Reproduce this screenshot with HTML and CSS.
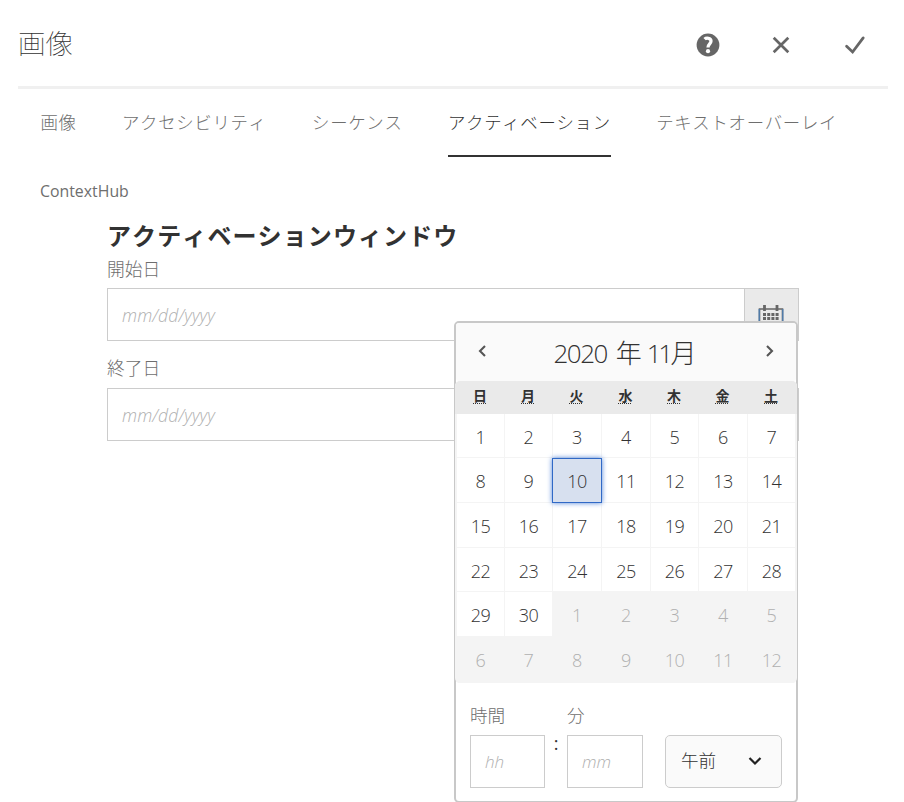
FILE: index.html
```html
<!DOCTYPE html>
<html lang="ja">
<head>
<meta charset="utf-8">
<title>画像</title>
<link rel="stylesheet" href="styles.css">
</head>
<body>
<main class="dialog">
  <header class="dialog-header">
    <h1>画像</h1>
    <div class="actions">
      <button class="icon-button" aria-label="ヘルプ"><svg width="24" height="24" viewBox="0 0 24 24"><circle cx="12" cy="12" r="11.4" fill="#666"/><path d="M8.6 6.2C10.2 4.6 15 4.8 15 8.1C15 10.9 12 10.8 12 14.6" fill="none" stroke="#fff" stroke-width="3.3"/><circle cx="12" cy="18.2" r="2.1" fill="#fff"/></svg></button>
      <button class="icon-button" aria-label="閉じる"><svg width="24" height="24" viewBox="0 0 24 24"><path d="M4.7 4.7L19.3 19.3M19.3 4.7L4.7 19.3" fill="none" stroke="#666" stroke-width="2.7"/></svg></button>
      <button class="icon-button" aria-label="完了"><svg width="24" height="24" viewBox="0 0 24 24"><path d="M3.6 13.3L9.6 19L20.2 4.9" fill="none" stroke="#666" stroke-width="2.8" stroke-linecap="round"/></svg></button>
    </div>
  </header>
  <nav class="tabs">
    <a class="tab">画像</a>
    <a class="tab">アクセシビリティ</a>
    <a class="tab">シーケンス</a>
    <a class="tab active">アクティベーション</a>
    <a class="tab">テキストオーバーレイ</a>
  </nav>
  <div class="context-label"><span>ContextHub</span></div>
  <section class="activation">
    <h2>アクティベーションウィンドウ</h2>
    <label class="field-label">開始日</label>
    <div class="date-field start">
      <div class="date-input"><span class="hint">mm/dd/yyyy</span></div>
      <div class="date-button"><svg width="26" height="26" viewBox="0 0 26 26"><path d="M1.5 24V5H24.5V24Z" fill="none" stroke="#666" stroke-width="1.6"/><path d="M1.2 5V24M24.8 5V24" stroke="#4c80b8" stroke-width="1.2"/><path d="M6.5 1V7M19 1V7" stroke="#666" stroke-width="2.8"/><path d="M5 10.5H21M5 14.5H21M5 18.5H21" stroke="#666" stroke-width="3" stroke-dasharray="3 1.2"/></svg></div>
      <div class="calendar">
        <div class="month-bar">
          <svg width="12" height="14" viewBox="0 0 12 14"><path d="M9 2L4 7L9 12" fill="none" stroke="#555" stroke-width="2.1"/></svg>
          <span class="month"><span class="year">2020</span><span>年</span><span><span class="month-number">11</span>月</span></span>
          <svg width="12" height="14" viewBox="0 0 12 14"><path d="M3 2L8 7L3 12" fill="none" stroke="#555" stroke-width="2.1"/></svg>
        </div>
        <div class="month-table">
          <div class="weekdays"><abbr>日</abbr><abbr>月</abbr><abbr>火</abbr><abbr>水</abbr><abbr>木</abbr><abbr>金</abbr><abbr>土</abbr></div>
          <div class="days">
            <span>1</span><span>2</span><span>3</span><span>4</span><span>5</span><span>6</span><span>7</span>
            <span>8</span><span>9</span><span class="today">10</span><span>11</span><span>12</span><span>13</span><span>14</span>
            <span>15</span><span>16</span><span>17</span><span>18</span><span>19</span><span>20</span><span>21</span>
            <span>22</span><span>23</span><span>24</span><span>25</span><span>26</span><span>27</span><span>28</span>
            <span>29</span><span>30</span><span class="out">1</span><span class="out">2</span><span class="out">3</span><span class="out">4</span><span class="out">5</span>
            <span class="out">6</span><span class="out">7</span><span class="out">8</span><span class="out">9</span><span class="out">10</span><span class="out">11</span><span class="out">12</span>
          </div>
        </div>
        <div class="time">
          <div class="time-part"><label>時間</label><div class="time-input"><span class="hint">hh</span></div></div>
          <span class="colon">:</span>
          <div class="time-part"><label>分</label><div class="time-input minute"><span class="hint">mm</span></div></div>
          <div class="period"><span>午前</span><svg width="14" height="10" viewBox="0 0 14 10"><path d="M1.5 2L7 7.5L12.5 2" fill="none" stroke="#222" stroke-width="2.2"/></svg></div>
        </div>
      </div>
    </div>
    <label class="field-label end-label">終了日</label>
    <div class="date-field">
      <div class="date-input"><span class="hint">mm/dd/yyyy</span></div>
      <div class="date-button"></div>
    </div>
  </section>
</main>
</body>
</html>
```
FILE: styles.css
```css
* { box-sizing: border-box; }
body {
  margin: 0;
  height: 802px;
  overflow: hidden;
  background: #fff;
  color: #323232;
  font-family: "Open Sans", "Noto Sans CJK JP", sans-serif;
  font-size: 18px;
  font-weight: 300;
}
h1, h2 { margin: 0; }
.dialog { padding: 0 16px 0 18px; }
.dialog-header {
  display: flex;
  justify-content: space-between;
  height: 89px;
  border-bottom: 3px solid #f0f0f0;
}
h1 { font: 100 27.5px/40px "Noto Sans CJK JP", sans-serif; margin-top: 22px; }
.actions { display: flex; gap: 49.5px; height: 24px; margin: 33px 21.5px 0 0; }
.icon-button { display: block; width: 24px; height: 24px; padding: 0; border: 0; background: none; }
.icon-button svg { display: block; }
.tabs { display: flex; gap: 45.4px; height: 68px; padding-left: 22.4px; }
.tab {
  height: 68px;
  line-height: 66px;
  color: #6e6e6e;
  font-family: "Noto Sans CJK JP", sans-serif;
  font-size: 17.4px;
  letter-spacing: .7px;
  font-kerning: none;
  white-space: nowrap;
}
.tab.active { color: #323232; border-bottom: 2px solid #323232; }
.context-label { height: 64px; padding: 22px 0 0 22px; color: #6e6e6e; line-height: 24px; font-size: 16.5px; font-weight: 400; }
.context-label span { display: inline-block; transform: scaleX(.96); transform-origin: left; }
.activation { width: 692px; margin-left: 89px; }
h2 { height: 35px; font: 700 24px/28px "Noto Sans CJK JP", sans-serif; letter-spacing: 1.1px; font-kerning: none; }
.field-label { display: block; height: 32px; line-height: 26px; color: #6e6e6e; font-size: 17.8px; }
.date-field { display: flex; position: relative; height: 53px; border: 1px solid #ccc; }
.end-label { margin-top: 14px; height: 33px; }
.date-input { flex: 1; padding-left: 14px; line-height: 52px; }
.hint { color: #b0b0b0; font-size: 17px; font-style: italic; font-weight: 300; }
.date-input .hint { font-size: 17.6px; letter-spacing: .1px; }
.date-button { width: 54px; background: #eaeaea; border-left: 1px solid #ccc; padding: 15px 0 0 13px; }
.calendar {
  position: absolute;
  z-index: 1;
  left: 346px;
  top: 32px;
  width: 344px;
  height: 482px;
  background: #fff;
  border: 2px solid #c8c8c8;
  border-radius: 5px;
}
.month-bar { display: flex; justify-content: space-between; height: 58px; padding: 21px 20px 0; background: #fafafa; border-radius: 3px; }
.month { display: flex; gap: 9px; margin: -8px 2px 0 0; line-height: 34px; font-size: 26px; }
.year { letter-spacing: -1.5px; }
.month-number { margin-left: -4px; letter-spacing: -3.5px; margin-right: 1px; }
.month-table { margin: 0 -1px; background: #f4f4f4; border-radius: 5px; overflow: hidden; }
.weekdays, .days { display: grid; grid-template-columns: 48px 48px 49px 49px 48px 49px 48px; padding: 0 1px; text-align: center; }
.weekdays { height: 33px; background: #eaeaea; line-height: 30px; font-weight: 700; font-size: 14px; }
.weekdays abbr { justify-self: center; text-decoration: underline dotted 1px; text-underline-offset: 2px; }
.days { grid-template-rows: 44px 45px 45px 44px 45px 46px; }
.days span { background: #fff; border: 0 solid #f4f4f4; border-width: 0 0 1px 1px; line-height: 46px; font-size: 18px; letter-spacing: -.4px; }
.days .out { background: #f4f4f4; color: #b0b0b0; }
.days .today { width: 50px; z-index: 1; line-height: 44px; background: #d7e0ef; border: 1px solid #3069c6; box-shadow: 0 0 5px #5084d8; }
.time { display: flex; padding: 19px 14px 0; }
.time-part label { display: block; height: 33px; line-height: 26px; color: #6e6e6e; font-size: 17.6px; }
.time-input { width: 75px; height: 53px; line-height: 51px; padding-left: 14px; border: 1px solid #ccc; }
.minute { width: 76px; }
.colon { width: 22px; padding-top: 29px; line-height: 24px; text-align: center; font-weight: 400; }
.period { display: flex; justify-content: space-between; align-items: center; width: 117px; height: 53px; margin: 33px 0 0 22px; padding: 0 19px 2px 15px; background: #fafafa; border: 1px solid #ccc; border-radius: 5px; }
.period span { margin-top: -2px; font-size: 17.6px; }
```
